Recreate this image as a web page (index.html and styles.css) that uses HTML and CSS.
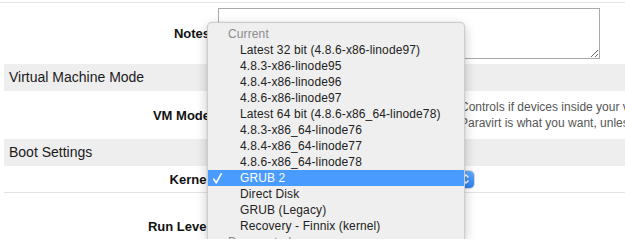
FILE: index.html
```html
<!DOCTYPE html>
<html>
<head>
<meta charset="utf-8">
<link rel="stylesheet" href="styles.css">
</head>
<body>
<div class="page">
  <div class="topline"></div>
  <div class="row row-notes">
    <label class="label">Notes</label>
    <div class="field"><textarea class="notes"></textarea></div>
  </div>
  <div class="band">Virtual Machine Mode</div>
  <div class="row row-vm">
    <label class="label">VM Mode</label>
    <div class="field field-vm">
      <div class="select select-vm"></div>
      <div class="desc">
        <div>Controls if devices inside your virtual machine are paravirtualized or fully virtualized.</div>
        <div>Paravirt is what you want, unless you're running a custom kernel.</div>
      </div>
    </div>
  </div>
  <div class="band">Boot Settings</div>
  <div class="row row-kernel">
    <label class="label">Kernel</label>
    <div class="field">
      <div class="select select-kernel">
        <span class="stepper">
          <svg width="8" height="12" viewBox="0 0 8 12"><path d="M1.5 4.5 L4 2 L6.5 4.5 M1.5 7.5 L4 10 L6.5 7.5" fill="none" stroke="#fff" stroke-width="1.3"/></svg>
        </span>
      </div>
    </div>
  </div>
  <div class="row row-run">
    <label class="label">Run Level</label>
    <div class="field"></div>
  </div>
</div>

<div class="menu">
  <div class="group">Current</div>
  <div class="item">Latest 32 bit (4.8.6-x86-linode97)</div>
  <div class="item">4.8.3-x86-linode95</div>
  <div class="item">4.8.4-x86-linode96</div>
  <div class="item">4.8.6-x86-linode97</div>
  <div class="item">Latest 64 bit (4.8.6-x86_64-linode78)</div>
  <div class="item">4.8.3-x86_64-linode76</div>
  <div class="item">4.8.4-x86_64-linode77</div>
  <div class="item">4.8.6-x86_64-linode78</div>
  <div class="item selected">
    <svg class="check" width="9" height="11" viewBox="0 0 9 11"><path d="M0.8 6.2 L3.2 9.8 L8.2 0.8" fill="none" stroke="#fff" stroke-width="1.6" stroke-linecap="round" stroke-linejoin="round"/></svg>GRUB 2</div>
  <div class="item">Direct Disk</div>
  <div class="item">GRUB (Legacy)</div>
  <div class="item">Recovery - Finnix (kernel)</div>
  <div class="group">Deprecated</div>
</div>
</body>
</html>
```

FILE: styles.css
```css
html, body {
  margin: 0;
  padding: 0;
  background: #ffffff;
  overflow: hidden;
}

body {
  width: 625px;
  height: 239px;
  position: relative;
  font-family: "Liberation Sans", Arial, sans-serif;
  color: #222;
}

.page {
  width: 625px;
  height: 239px;
  overflow: hidden;
}

.topline {
  height: 2px;
  border-bottom: 1px solid #e4e4e4;
}

.row {
  margin-left: 4px;
  display: grid;
  grid-template-columns: 206px minmax(0, 1fr);
  column-gap: 8px;
  align-items: center;
}

.label {
  text-align: right;
  font-weight: bold;
  font-size: 13px;
  color: #111;
}

.field {
  display: flex;
  align-items: center;
  min-width: 0;
}

.row-notes {
  padding: 5px 0;
}

.notes {
  box-sizing: border-box;
  width: 382px;
  height: 51px;
  margin: 0;
  border: 1px solid #a9a9a9;
  border-radius: 0;
  padding: 2px;
  font-family: "Liberation Sans", Arial, sans-serif;
  display: block;
}

.band {
  margin-left: 4px;
  height: 27px;
  line-height: 27px;
  padding-left: 5px;
  background: #eeeeee;
  font-size: 14px;
  color: #1a1a1a;
}

.row-vm {
  height: 48px;
}

.field-vm {
  gap: 8px;
  overflow: hidden;
}

.select {
  box-sizing: border-box;
  height: 17px;
  border-radius: 4px;
  background: #fff;
  border: 1px solid #c8c8c8;
  flex-shrink: 0;
}

.select-vm {
  width: 234px;
}

.desc {
  font-size: 12px;
  line-height: 16px;
  color: #555;
  white-space: nowrap;
  overflow: hidden;
  min-width: 0;
}

.row-kernel {
  height: 26px;
  border-bottom: 1px solid #e4e4e4;
}

.select-kernel {
  width: 256px;
  display: flex;
  align-items: center;
  justify-content: flex-end;
  border: none;
  box-shadow: 0 0 0 1px rgba(0, 0, 0, 0.15);
  overflow: hidden;
}

.stepper {
  width: 16px;
  height: 17px;
  border-radius: 0 4px 4px 0;
  background: linear-gradient(#62acff, #2f80f2);
  display: flex;
  align-items: center;
  justify-content: center;
}

.stepper svg {
  display: block;
}

.row-run {
  height: 66px;
}

.menu {
  position: absolute;
  left: 207px;
  top: 22px;
  width: 258px;
  height: 217px;
  box-sizing: border-box;
  padding-top: 3px;
  background: #efefef;
  border: 1px solid rgba(0, 0, 0, 0.14);
  border-bottom: none;
  border-radius: 5px 5px 0 0;
  box-shadow: 0 4px 12px rgba(0, 0, 0, 0.22), 0 0 2px rgba(0, 0, 0, 0.1);
  font-size: 12px;
  letter-spacing: 0.12px;
  overflow: hidden;
}

.group {
  height: 16px;
  line-height: 16px;
  padding-left: 20px;
  color: #8b8b8b;
}

.item {
  height: 16px;
  line-height: 16px;
  padding-left: 32px;
  color: #222;
  position: relative;
  white-space: nowrap;
}

.item.selected {
  background: #4a9bff;
  color: #fff;
}

.check {
  position: absolute;
  left: 5px;
  top: 3px;
}
```
